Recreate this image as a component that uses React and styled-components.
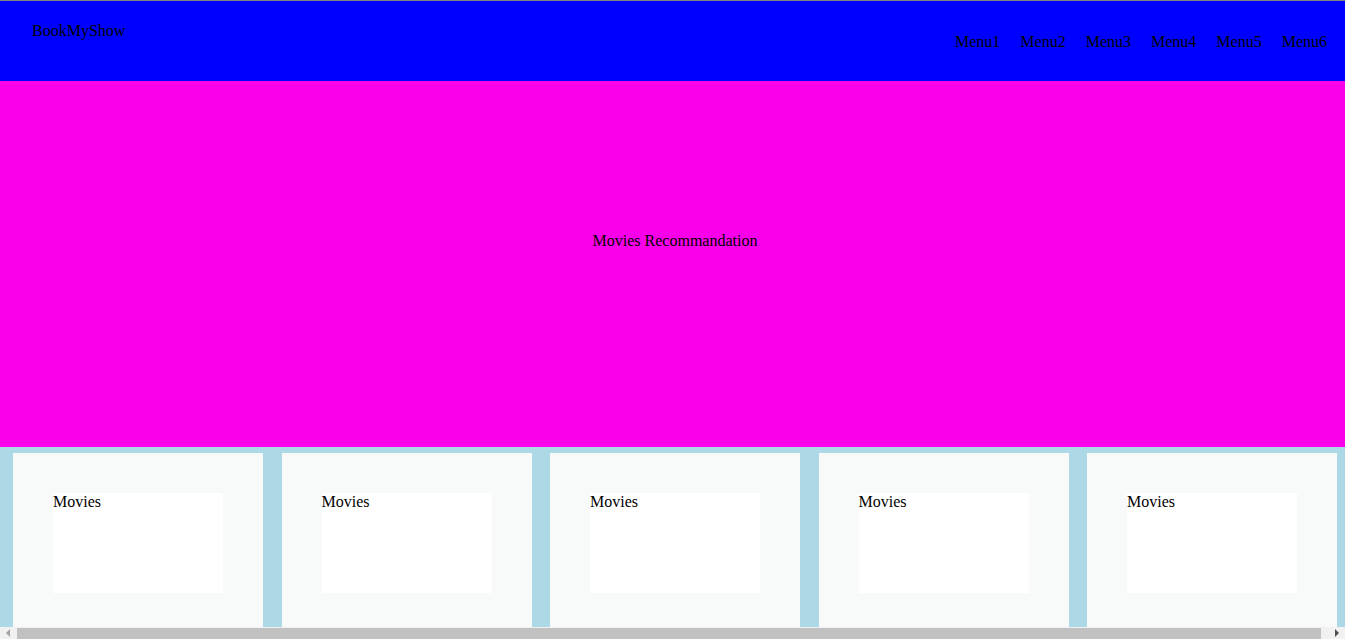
import styled, { createGlobalStyle } from "styled-components";

const GlobalStyle = createGlobalStyle`
  html {
    overflow: hidden;
  }
  body {
    margin: 0;
    font-family: "Liberation Serif", "Times New Roman", serif;
    font-size: 16px;
    color: #000;
  }
`;

const Page = styled.div`
  width: 1350px;
  border-top: 1px solid #808080;
`;

const Header = styled.header`
  height: 80px;
  background: #0000ff;
  display: flex;
  justify-content: space-between;
  align-items: center;
  padding: 2px 23px 0 32px;
  box-sizing: border-box;
`;

const Logo = styled.div`
  align-self: flex-start;
  padding-top: 19px;
`;

const Nav = styled.nav`
  display: flex;
  gap: 20px;
`;

const Hero = styled.section`
  height: 366px;
  box-sizing: border-box;
  padding-top: 151px;
  background: #fa00ea;
  text-align: center;
`;

const Row = styled.section`
  background: #add8e6;
  display: flex;
  justify-content: space-between;
  padding: 6px 13px 8px;
`;

const Card = styled.div`
  width: 250px;
  padding: 40px;
  box-sizing: border-box;
  background: #f8f9f9;
`;

const Poster = styled.div`
  height: 100px;
  background: #fff;
`;

/* drawn stand-in for the browser's horizontal scrollbar */
const ScrollBar = styled.div`
  position: fixed;
  left: 0;
  right: 0;
  bottom: 0;
  height: 12px;
  background: #f1f1f1;
  display: flex;
  align-items: center;
`;

const Arrow = styled.div`
  width: 17px;
  height: 12px;
  display: flex;
  align-items: center;
  justify-content: center;
`;

const Track = styled.div`
  flex: 1;
  height: 11px;
  align-self: flex-end;
  position: relative;
`;

const Thumb = styled.div`
  height: 100%;
  width: 99.5%;
  background: #c1c1c1;
`;

const menus = ["Menu1", "Menu2", "Menu3", "Menu4", "Menu5", "Menu6"];

export default function App() {
  return (
    <>
      <GlobalStyle />
      <Page>
        <Header>
          <Logo>BookMyShow</Logo>
          <Nav>
            {menus.map((m) => (
              <span key={m}>{m}</span>
            ))}
          </Nav>
        </Header>
        <Hero>Movies Recommandation</Hero>
        <Row>
          {[1, 2, 3, 4, 5].map((i) => (
            <Card key={i}>
              <Poster>Movies</Poster>
            </Card>
          ))}
        </Row>
      </Page>
      <ScrollBar>
        <Arrow>
          <svg width="5" height="8" viewBox="0 0 5 8">
            <path d="M4 0 L0 4 L4 8 Z" fill="#a3a3a3" />
          </svg>
        </Arrow>
        <Track>
          <Thumb />
        </Track>
        <Arrow>
          <svg width="5" height="8" viewBox="0 0 5 8">
            <path d="M1 0 L5 4 L1 8 Z" fill="#505050" />
          </svg>
        </Arrow>
      </ScrollBar>
    </>
  );
}
